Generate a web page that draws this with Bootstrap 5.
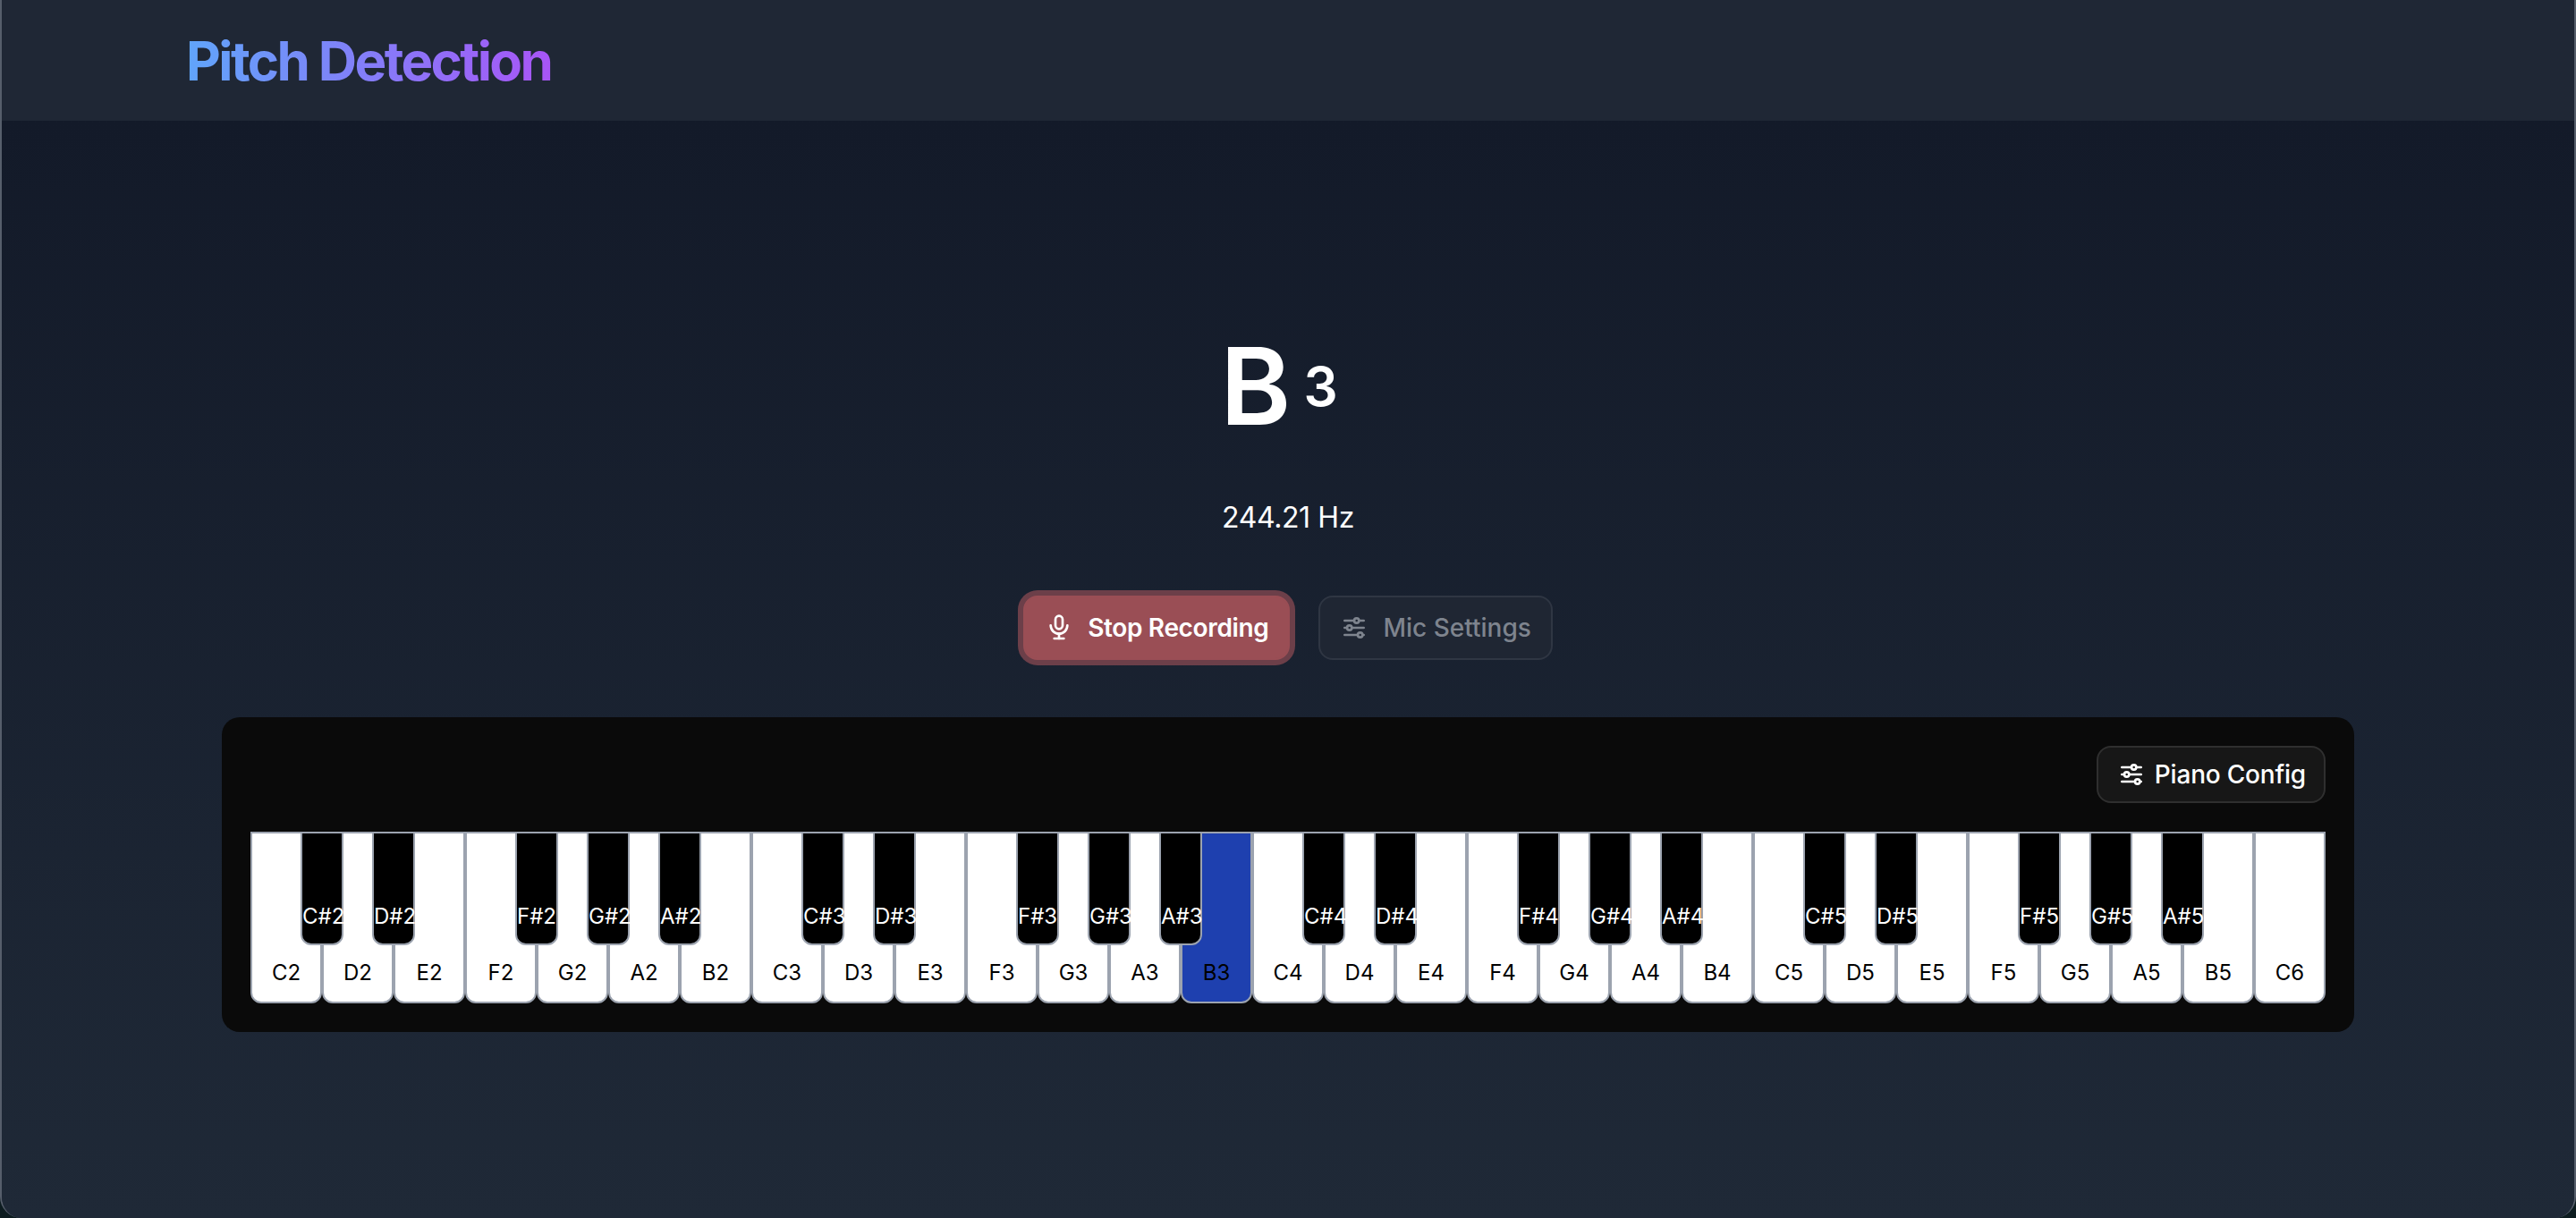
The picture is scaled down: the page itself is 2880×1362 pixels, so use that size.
<!DOCTYPE html>
<html lang="en">
<head>
    <meta charset="UTF-8">
    <title>Pitch Detection</title>
    <link href="https://cdn.jsdelivr.net/npm/bootstrap@5.3.3/dist/css/bootstrap.min.css" rel="stylesheet">
    <script src="https://cdn.jsdelivr.net/npm/bootstrap@5.3.3/dist/js/bootstrap.bundle.min.js"></script>
    <style>
        html { background: #0d1c20; }
        body { background: transparent; font-family: Inter, "Liberation Sans", sans-serif; color: #fff; }
        .app-window {
            height: 100vh;
            overflow: hidden;
            border: solid #565e6b;
            border-width: 0 2px;
            border-radius: 0 0 24px 24px;
            background: #1f2937;
        }
        .top-bar { height: 135px; padding-left: 206px; background: #1f2735; }
        .app-title {
            margin: 0;
            font-size: 60px;
            font-weight: 700;
            line-height: 72px;
            letter-spacing: -2.6px;
            background: linear-gradient(to right, #60a5fa, #a855f7);
            -webkit-background-clip: text;
            background-clip: text;
            color: transparent;
        }
        .main-area { height: 1227px; background: linear-gradient(to bottom, #131a29, #1f2937); }
        .note-line { margin-top: 237px; padding-right: 20px; height: 120px; line-height: 120px; font-weight: 600; }
        .note-name { font-size: 120px; }
        .note-octave { font-size: 60px; line-height: 72px; margin-left: 14px; margin-top: 24px; }
        .freq-text { margin-top: 63px; font-size: 32px; line-height: 48px; letter-spacing: -0.4px; }
        .action-row { margin-top: 63px; gap: 32px; }
        .pill-btn {
            display: inline-flex;
            align-items: center;
            gap: 16px;
            height: 72px;
            padding: 0 22px;
            border: 2px solid transparent;
            border-radius: 16px;
            font-size: 28px;
            font-weight: 500;
            line-height: 40px;
        }
        .pill-btn svg { width: 32px; height: 32px; flex: none; }
        .stop-btn, .stop-btn:hover { background: #9a4e55; border-color: #9a4e55; color: #fff; box-shadow: 0 0 0 6px #6c3f49; font-weight: 600; letter-spacing: -0.35px; }
        .mic-btn, .mic-btn:hover { background: #1f2633; border-color: #2f3643; color: #7e848e; }
        .piano-panel { width: 2384px; margin-top: 64px; padding: 32px; background: #0a0a0a; border-radius: 20px; }
        .config-btn, .config-btn:hover { gap: 10px; height: 64px; padding: 0 20px 0 21px; background: #171717; border-color: #2f2f2f; color: #fff; letter-spacing: -0.2px; }
        .key-row { margin-top: 32px; height: 192px; }
        .white-key {
            position: relative;
            width: 80px;
            height: 192px;
            padding-bottom: 16px;
            background: #fff;
            color: #000;
            border: 2px solid #9ca3af;
            border-radius: 0 0 12px 12px;
            font-size: 24px;
            line-height: 32px;
            text-align: center;
        }
        .white-key.is-active { background: #1e40af; }
        .black-key {
            position: absolute;
            top: -2px;
            right: -26px;
            z-index: 1;
            width: 48px;
            height: 127px;
            padding-bottom: 14px;
            background: #000;
            color: #fff;
            border: 2px solid #9ca3af;
            border-radius: 0 0 12px 12px;
            white-space: nowrap;
        }
    </style>
</head>
<body>
<div class="app-window">
    <header class="top-bar d-flex align-items-center">
        <h1 class="app-title">Pitch Detection</h1>
    </header>

    <main class="main-area d-flex flex-column align-items-center">
        <div class="note-line d-flex align-items-start">
            <span class="note-name">B</span>
            <span class="note-octave">3</span>
        </div>
        <div class="freq-text">244.21 Hz</div>

        <div class="action-row d-flex">
            <button type="button" class="btn pill-btn stop-btn">
                <svg viewBox="0 0 24 24" fill="none" stroke="currentColor" stroke-width="2" stroke-linecap="round" stroke-linejoin="round"><path d="M9 5a3 3 0 0 1 3 -3a3 3 0 0 1 3 3v5a3 3 0 0 1 -3 3a3 3 0 0 1 -3 -3z"/><path d="M5 10a7 7 0 0 0 14 0"/><path d="M8 21h8"/><path d="M12 17v4"/></svg>
                Stop Recording
            </button>
            <button type="button" class="btn pill-btn mic-btn">
                <svg viewBox="0 0 24 24" fill="none" stroke="currentColor" stroke-width="2" stroke-linecap="round" stroke-linejoin="round"><circle cx="14" cy="6" r="2"/><path d="M4 6h8"/><path d="M16 6h4"/><circle cx="8" cy="12" r="2"/><path d="M4 12h2"/><path d="M10 12h10"/><circle cx="17" cy="18" r="2"/><path d="M4 18h11"/><path d="M19 18h1"/></svg>
                Mic Settings
            </button>
        </div>

        <section class="piano-panel">
            <div class="d-flex justify-content-end">
                <button type="button" class="btn pill-btn config-btn">
                    <svg viewBox="0 0 24 24" fill="none" stroke="currentColor" stroke-width="2" stroke-linecap="round" stroke-linejoin="round"><circle cx="14" cy="6" r="2"/><path d="M4 6h8"/><path d="M16 6h4"/><circle cx="8" cy="12" r="2"/><path d="M4 12h2"/><path d="M10 12h10"/><circle cx="17" cy="18" r="2"/><path d="M4 18h11"/><path d="M19 18h1"/></svg>
                    Piano Config
                </button>
            </div>
            <div class="key-row d-flex" id="keys"></div>
        </section>
    </main>
</div>
<script>
    const keyRow = document.getElementById("keys");
    const names = ["C", "D", "E", "F", "G", "A", "B"];
    const hasSharp = ["C", "D", "F", "G", "A"];

    function addKey(name, octave) {
        const label = name + octave;
        const key = document.createElement("div");
        key.className = "white-key d-flex flex-column justify-content-end";
        if (label === "B3") key.classList.add("is-active");
        key.append(label);
        // C6 is the last key, no sharp after it
        if (hasSharp.includes(name) && octave < 6) {
            const sharp = document.createElement("div");
            sharp.className = "black-key d-flex flex-column justify-content-end";
            sharp.textContent = name + "#" + octave;
            key.appendChild(sharp);
        }
        keyRow.appendChild(key);
    }

    for (let octave = 2; octave <= 5; octave++) {
        names.forEach(name => addKey(name, octave));
    }
    addKey("C", 6);
</script>
</body>
</html>
